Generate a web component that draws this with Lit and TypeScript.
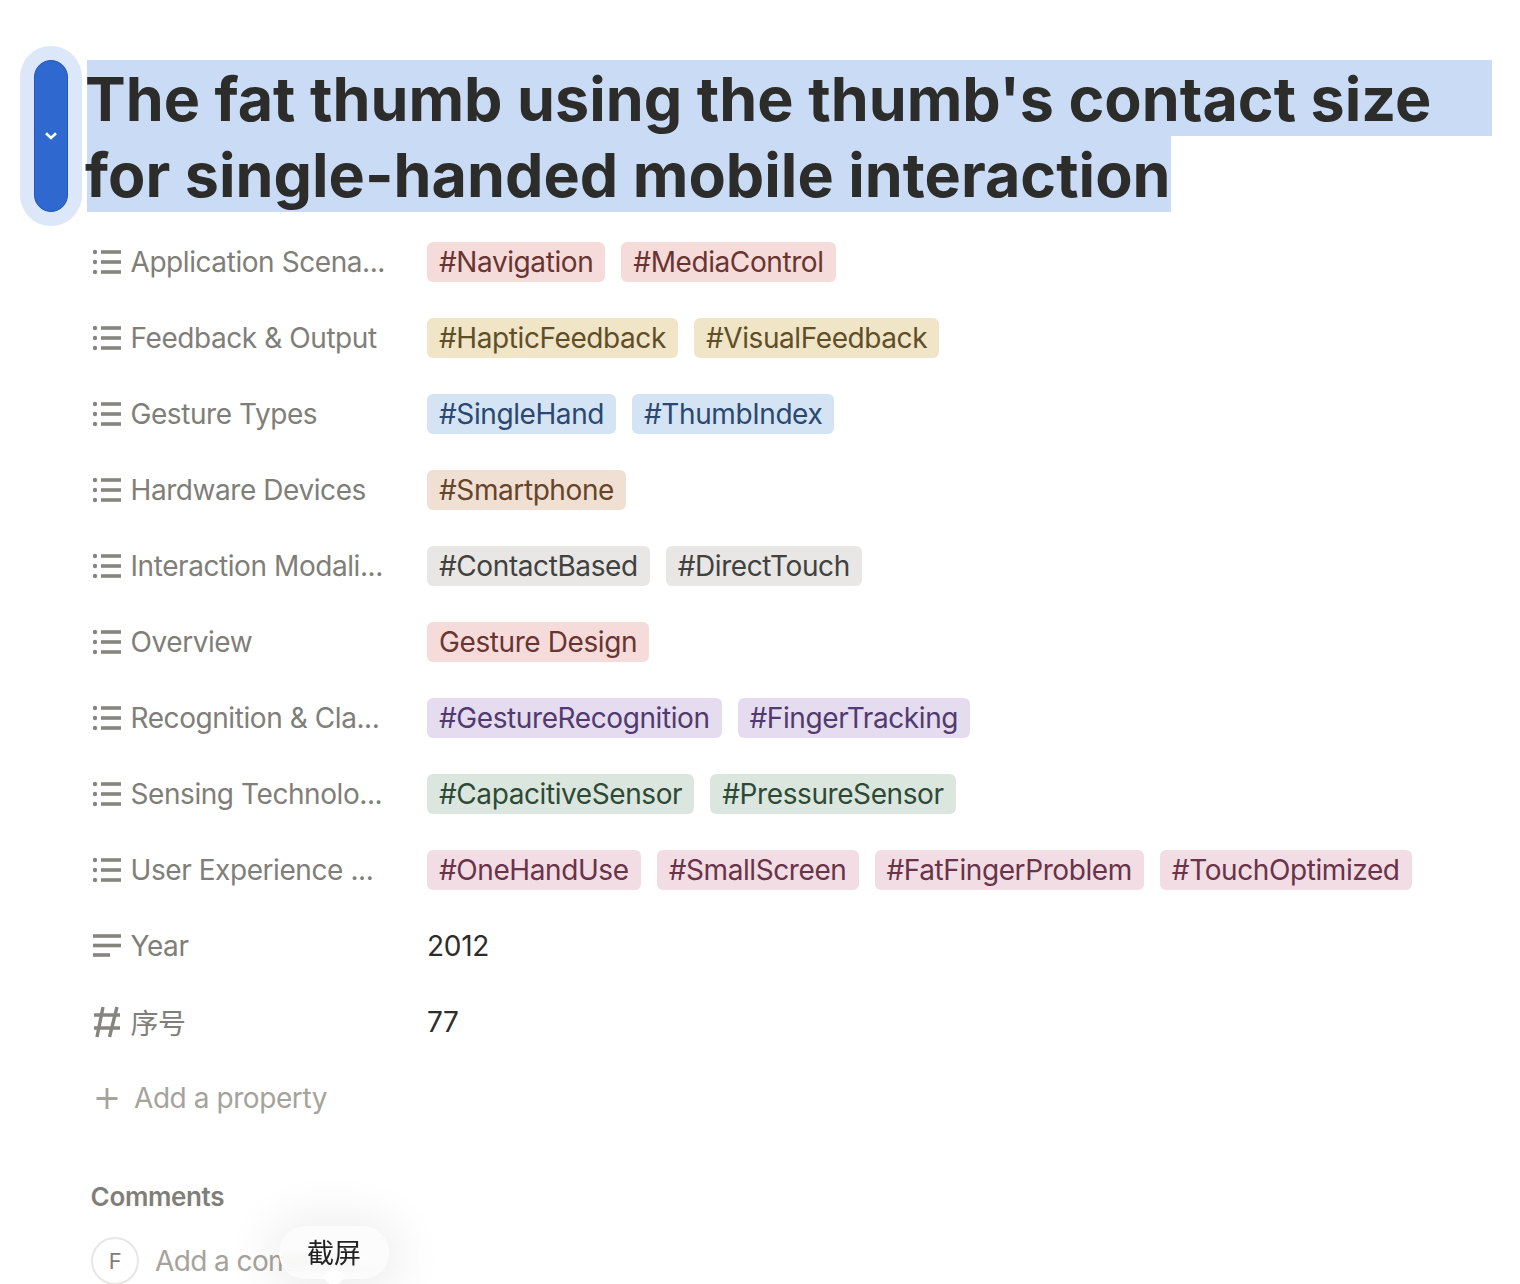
import { LitElement, html, css, svg } from 'lit';
import { customElement } from 'lit/decorators.js';

type Tone = 'red' | 'yellow' | 'blue' | 'brown' | 'gray' | 'purple' | 'green' | 'pink';

interface Prop {
  icon: 'list' | 'text' | 'number';
  label: string;
  tone?: Tone;
  tags?: string[];
  value?: string;
}

const PROPS: Prop[] = [
  { icon: 'list', label: 'Application Scena...', tone: 'red', tags: ['#Navigation', '#MediaControl'] },
  { icon: 'list', label: 'Feedback & Output', tone: 'yellow', tags: ['#HapticFeedback', '#VisualFeedback'] },
  { icon: 'list', label: 'Gesture Types', tone: 'blue', tags: ['#SingleHand', '#ThumbIndex'] },
  { icon: 'list', label: 'Hardware Devices', tone: 'brown', tags: ['#Smartphone'] },
  { icon: 'list', label: 'Interaction Modali...', tone: 'gray', tags: ['#ContactBased', '#DirectTouch'] },
  { icon: 'list', label: 'Overview', tone: 'red', tags: ['Gesture Design'] },
  { icon: 'list', label: 'Recognition & Cla...', tone: 'purple', tags: ['#GestureRecognition', '#FingerTracking'] },
  { icon: 'list', label: 'Sensing Technolo...', tone: 'green', tags: ['#CapacitiveSensor', '#PressureSensor'] },
  { icon: 'list', label: 'User Experience ...', tone: 'pink', tags: ['#OneHandUse', '#SmallScreen', '#FatFingerProblem', '#TouchOptimized'] },
  { icon: 'text', label: 'Year', value: '2012' },
  { icon: 'number', label: '序号', value: '77' },
];

const ICONS = {
  list: svg`<circle cx="4" cy="3" r="2.200" /><circle cx="4" cy="13" r="2.200" /><circle cx="4" cy="23" r="2.200" />
    <rect x="10" y="1.200" width="20" height="3.600" /><rect x="10" y="11.200" width="20" height="3.600" /><rect x="10" y="21.200" width="20" height="3.600" />`,
  text: svg`<rect x="2" y="1.200" width="28" height="3.600" /><rect x="2" y="10.700" width="28" height="3.600" /><rect x="2" y="20.200" width="17" height="3.600" />`,
  number: svg`<path d="M12 -2 6 28M26 -2 18.500 28M3 6h26M3 19h26" fill="none" stroke="currentColor" stroke-width="3.400" />`,
};

@customElement('app-root')
export class AppRoot extends LitElement {
  static styles = css`
    :host {
      display: block;
      height: 1284px;
      overflow: hidden;
      position: relative;
      background: #fff;
      font-family: Inter, 'Noto Sans CJK SC', sans-serif;
    }

    .page {
      padding: 60px 28px 0 87px;
    }

    .title {
      font-size: 61px;
      line-height: 78px;
      font-weight: 700;
      letter-spacing: 0.020px;
      color: #2c2c2b;
      white-space: nowrap;
    }

    .line {
      display: block;
      height: 76px;
      width: fit-content;
      text-indent: -2px;
      background: #cadbf5;
    }

    .line.full {
      width: auto;
    }

    .handle {
      position: absolute;
      left: 20px;
      top: 46px;
      width: 62px;
      height: 180px;
      box-sizing: border-box;
      padding: 14px;
      border-radius: 31px;
      background: #dce7f9;
    }

    .pill {
      height: 100%;
      box-sizing: border-box;
      display: flex;
      align-items: center;
      justify-content: center;
      border-radius: 17px;
      background: #2f68cf;
      border: 1px solid #2759b4;
    }

    .props {
      margin-top: 12px;
      margin-left: 4px;
    }

    .row {
      height: 76px;
      display: flex;
      align-items: center;
    }

    .name {
      width: 336px;
      flex: none;
      display: flex;
      align-items: center;
      gap: 7.500px;
      font-size: 28px;
      letter-spacing: -0.430px;
      color: #7f7e79;
      white-space: nowrap;
    }

    .icon {
      width: 32px;
      height: 26px;
      flex: none;
      overflow: visible;
      fill: #85847f;
      color: #85847f;
    }

    .values {
      display: flex;
      gap: 16px;
    }

    .tag {
      height: 40px;
      padding: 0 12px;
      display: flex;
      align-items: center;
      border-radius: 6px;
      font-size: 28px;
      letter-spacing: -0.410px;
      white-space: nowrap;
    }

    .red { background: #f5dcdb; color: #6a3531; }
    .yellow { background: #f0e5c7; color: #5f4f28; }
    .blue { background: #d5e4f4; color: #2b4870; }
    .brown { background: #f0e0d3; color: #66452a; }
    .gray { background: #e8e7e5; color: #42413e; }
    .purple { background: #e5dcef; color: #523a70; }
    .green { background: #dbe7de; color: #2e4a37; }
    .pink { background: #f2dde5; color: #693348; }

    .plain {
      font-size: 28px;
      letter-spacing: -0.300px;
      color: #2c2c2b;
    }

    .add {
      height: 76px;
      display: flex;
      align-items: center;
      gap: 15px;
      padding-left: 4px;
      font-size: 28px;
      letter-spacing: -0.430px;
      color: #a5a39c;
    }

    .comments {
      margin-top: 42px;
      margin-left: 3.600px;
      font-size: 26px;
      line-height: 38px;
      font-weight: 600;
      letter-spacing: -0.350px;
      color: #7f7e79;
    }

    .composer {
      margin-top: 21px;
      margin-left: 4px;
      display: flex;
      align-items: center;
      gap: 16px;
      font-size: 28px;
      letter-spacing: -0.600px;
      color: #a5a39c;
      white-space: nowrap;
    }

    .avatar {
      width: 48px;
      height: 48px;
      box-sizing: border-box;
      flex: none;
      display: flex;
      align-items: center;
      justify-content: center;
      border: 2px solid #e8e7e5;
      border-radius: 50%;
      font-size: 22px;
      color: #7f7e79;
    }

    .tip {
      position: absolute;
      left: 281px;
      top: 1228px;
      width: 106px;
      height: 49px;
      display: flex;
      align-items: center;
      justify-content: center;
      box-sizing: border-box;
      padding-bottom: 2px;
      border-radius: 25px;
      background: rgba(251, 251, 251, 0.860);
      backdrop-filter: blur(4px);
      font-size: 27px;
      color: #222;
      box-shadow: 0 0 0 2px #fcfcfc, 0 4px 50px 14px rgba(0, 0, 0, 0.070);
    }

    .tip::after {
      content: '';
      position: absolute;
      left: 45px;
      bottom: -8px;
      width: 16px;
      height: 16px;
      background: #fff;
      transform: rotate(45deg);
    }
  `;

  private renderRow(p: Prop) {
    return html`
      <div class="row">
        <div class="name">
          <svg class="icon" viewBox="0 0 32 26">${ICONS[p.icon]}</svg>
          <span>${p.label}</span>
        </div>
        ${p.tags
          ? html`<div class="values">${p.tags.map((t) => html`<span class="tag ${p.tone}">${t}</span>`)}</div>`
          : html`<span class="plain">${p.value}</span>`}
      </div>
    `;
  }

  render() {
    return html`
      <div class="page">
        <div class="title">
          <span class="line full">The fat thumb using the thumb's contact size</span>
          <span class="line">for single-handed mobile interaction</span>
        </div>
        <div class="props">
          ${PROPS.map((p) => this.renderRow(p))}
          <div class="add">
            <svg width="24" height="24" viewBox="0 0 24 24" fill="none" stroke="#a5a39c" stroke-width="2.800">
              <path d="M12 2v21M1.500 12.500h21" />
            </svg>
            <span>Add a property</span>
          </div>
        </div>
        <div class="comments">Comments</div>
        <div class="composer">
          <span class="avatar">F</span>
          <span>Add a comment...</span>
        </div>
      </div>
      <div class="handle">
        <div class="pill">
          <svg width="14" height="10" viewBox="0 0 14 10" fill="none" stroke="#fff" stroke-width="2.600">
            <path d="M2 2.200 7 7l5-4.800" />
          </svg>
        </div>
      </div>
      <div class="tip">截屏</div>
    `;
  }
}

declare global {
  interface HTMLElementTagNameMap {
    'app-root': AppRoot;
  }
}
